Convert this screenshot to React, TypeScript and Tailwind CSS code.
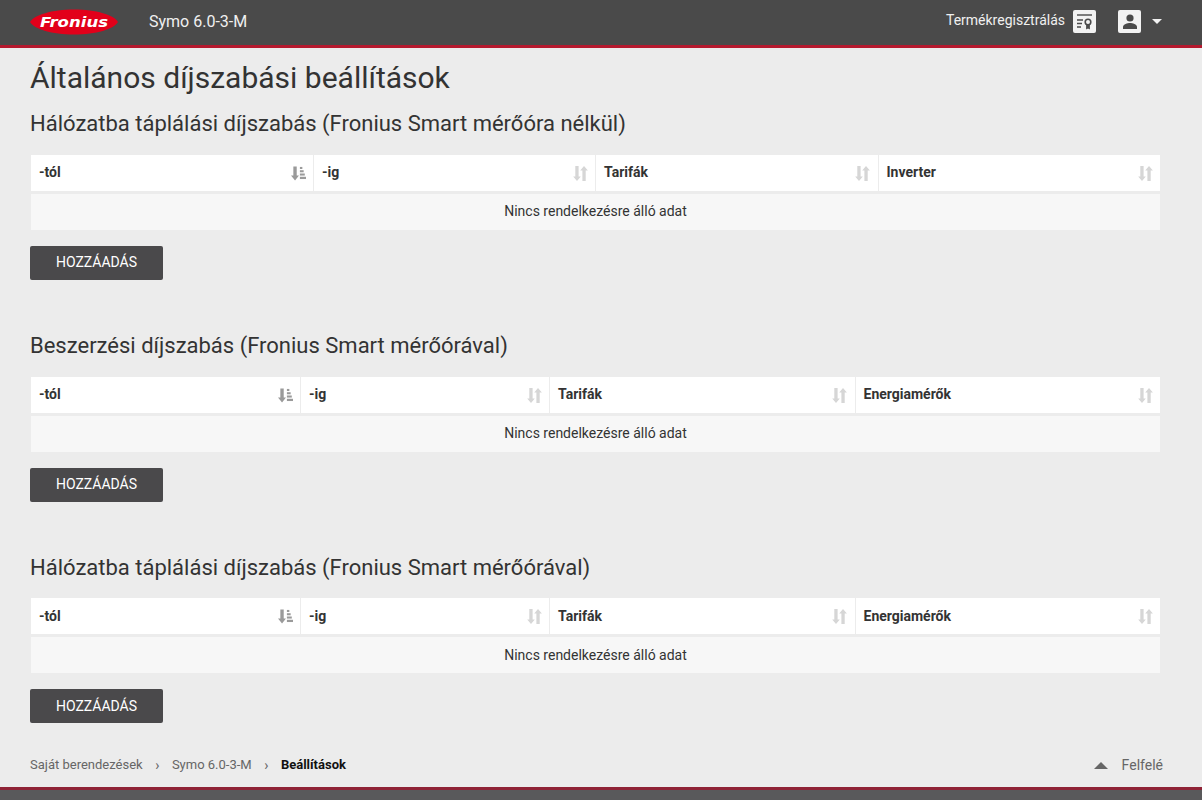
const font = "font-['Roboto',sans-serif]";

function SortActive() {
  return (
    <svg width="15" height="15" viewBox="0 0 16 15" className="shrink-0" fill="#9a9a9a">
      <path d="M2.500 0h3.600v9.500H8.500L4.300 15 0 9.500h2.500z" />
      <rect x="9.500" y="0.500" width="2.600" height="2.200" />
      <rect x="9.500" y="4" width="4" height="2.200" />
      <rect x="9.500" y="7.500" width="5.200" height="2.200" />
      <rect x="9.500" y="11" width="6.500" height="2.400" />
    </svg>
  );
}

function SortIdle() {
  return (
    <svg width="15" height="15" viewBox="0 0 15 15" className="shrink-0" fill="#d6d6d6">
      <path d="M2.300 0h3.300v10.500h2.200L4 15 0.200 10.500h2.100z" />
      <path d="M9.400 15h3.300V4.500h2.200L11 0 7.200 4.500h2.200z" />
    </svg>
  );
}

type Col = { label: string; width: string; active?: boolean };

function Section({ title, cols, gap, tableGap, textPad }: { title: string; cols: Col[]; gap: string; tableGap: string; textPad: string }) {
  return (
    <section className={gap}>
      <h2 className="text-[22px] leading-[26px] text-[#333333] font-normal">{title}</h2>
      <div className={`${tableGap} ml-px w-[1129px]`}>
        <div className="flex h-[36px] bg-white">
          {cols.map((c, i) => (
            <div
              key={c.label}
              className={`flex items-center justify-between pl-[8px] pr-[7.500px] ${c.width} ${i < cols.length - 1 ? "border-r border-[#ececec]" : ""}`}
            >
              <span className={`text-[14px] font-bold text-[#333333] ${textPad}`}>{c.label}</span>
              {c.active ? <SortActive /> : <SortIdle />}
            </div>
          ))}
        </div>
        <div className={`mt-[3px] h-[36px] ${textPad} bg-[#f7f7f7] flex items-center justify-center text-[14px] text-[#333333]`}>
          Nincs rendelkezésre álló adat
        </div>
      </div>
      <button className={`mt-[16px] ${textPad} block w-[133px] h-[34px] rounded-[2px] bg-[#4a494b] text-white text-[14px] uppercase`}>
        Hozzáadás
      </button>
    </section>
  );
}

export default function App() {
  const colsA: Col[] = [
    { label: "-tól", width: "w-[283px]", active: true },
    { label: "-ig", width: "w-[282px]" },
    { label: "Tarifák", width: "w-[282.500px]" },
    { label: "Inverter", width: "flex-1" },
  ];
  const colsB: Col[] = [
    { label: "-tól", width: "w-[270px]", active: true },
    { label: "-ig", width: "w-[249px]" },
    { label: "Tarifák", width: "w-[305.500px]" },
    { label: "Energiamérők", width: "flex-1" },
  ];
  return (
    <div className={`${font} w-[1202px] h-[800px] overflow-hidden bg-[#ececec] flex flex-col`}>
      <header className="h-[48px] shrink-0 bg-[#4a4a4a] border-b-[3px] border-[#b5192e] pb-[2px] flex items-center pl-[30px] pr-[40px]">
        <svg width="88" height="26" viewBox="0 0 88 26" className="shrink-0">
          <path d="M0 13C4 6 22 0.500 44 0.500S84 6 88 13C84 20 66 25.500 44 25.500S4 20 0 13z" fill="#e2001a" />
          <text x="44" y="18" textAnchor="middle" textLength="68" lengthAdjust="spacingAndGlyphs" fill="#ffffff" fontSize="14" fontWeight="700" fontStyle="italic" fontFamily="'DejaVu Sans', sans-serif">Fronius</text>
        </svg>
        <span className="ml-[31px] text-[16px] text-[#f0f0f0]">Symo 6.0-3-M</span>
        <span className="ml-auto pb-[2px] text-[14px] text-[#f0f0f0]">Termékregisztrálás</span>
        <div className="ml-[8px] w-[23px] h-[23px] rounded-[2px] bg-[#f2f2f2] flex items-center justify-center">
          <svg width="17" height="17" viewBox="0 0 17 17" fill="none" stroke="#4a4a4a">
            <path d="M1 2h15" strokeWidth="1.400" />
            <path d="M1 7h6M1 10.500h5M1 14h4" strokeWidth="1.400" />
            <circle cx="12" cy="9" r="2.800" strokeWidth="1.600" />
            <path d="M10.500 11.500V16l1.500-1 1.500 1v-4.500" fill="#4a4a4a" strokeWidth="0.800" />
          </svg>
        </div>
        <div className="ml-[22px] w-[23px] h-[23px] rounded-[2px] bg-[#f2f2f2] flex items-center justify-center">
          <svg width="16" height="15" viewBox="0 0 16 15" fill="#4a4a4a">
            <circle cx="8" cy="4" r="3.600" />
            <path d="M1 15v-2c0-2.600 4.500-4 7-4s7 1.400 7 4v2z" />
          </svg>
        </div>
        <div className="ml-[11px] w-0 h-0 border-x-[5px] border-x-transparent border-t-[5px] border-t-[#f2f2f2]" />
      </header>

      <main className="flex-1 pl-[30px] flex flex-col">
        <h1 className="mt-[12px] text-[30px] leading-[36px] text-[#333333] font-normal">Általános díjszabási beállítások</h1>
        <Section gap="mt-[15px]" tableGap="mt-[18px]" textPad="pb-[2px]" title="Hálózatba táplálási díjszabás (Fronius Smart mérőóra nélkül)" cols={colsA} />
        <Section gap="mt-[53px]" tableGap="mt-[18px]" textPad="pb-[2px]" title="Beszerzési díjszabás (Fronius Smart mérőórával)" cols={colsB} />
        <Section gap="mt-[53px]" tableGap="mt-[17px]" textPad="pb-0" title="Hálózatba táplálási díjszabás (Fronius Smart mérőórával)" cols={colsB} />
        <div className="mt-auto h-[50px] pt-[6px] flex items-center pr-[39px] text-[13px] text-[#666666]">
          <span>Saját berendezések</span>
          <span className="mx-[12.500px] text-[14px]">›</span>
          <span>Symo 6.0-3-M</span>
          <span className="mx-[12.500px] text-[14px]">›</span>
          <span className="font-bold text-[#111111]">Beállítások</span>
          <div className="ml-auto w-0 h-0 border-x-[7px] border-x-transparent border-b-[7px] border-b-[#666666]" />
          <span className="ml-[14px] text-[14px]">Felfelé</span>
        </div>
      </main>

      <footer className="h-[13px] shrink-0 bg-[#59595b] border-t-[3px] border-[#8f2336]" />
    </div>
  );
}
